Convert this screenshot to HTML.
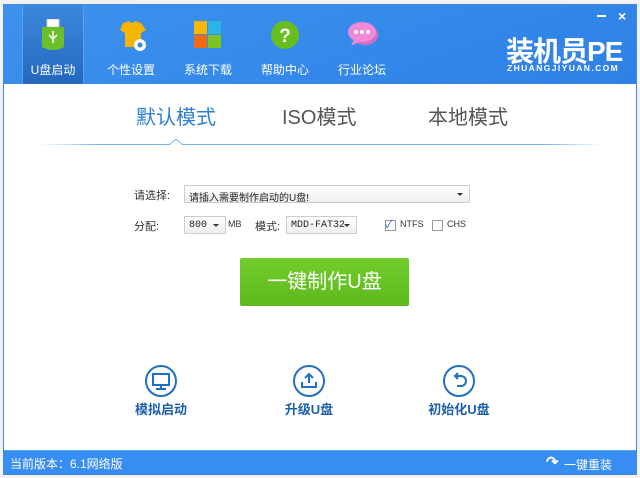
<!DOCTYPE html>
<html><head><meta charset="utf-8"><style>
*{margin:0;padding:0;box-sizing:border-box}
body{width:640px;height:478px;background:#f2f2f2;position:relative;overflow:hidden;font-family:"Liberation Sans","Noto Sans CJK SC",sans-serif}
.win{position:absolute;left:3px;top:4px;width:634px;height:471px;background:#fff;border:1px solid #3a8ae6}
.hd{position:absolute;left:0;top:0;width:632px;height:79px;background:linear-gradient(160deg,#3d92ec 0%,#3488ea 60%,#2f80e4 100%)}
.nav{position:absolute;top:0;height:79px;width:62px;text-align:center;color:#fff;font-size:12px}
.nav .lb{position:absolute;top:56px;width:100%;left:0}
.nav svg{position:absolute;left:15px;top:14px}
.sel{background:linear-gradient(#3b88dd,#2468be);border-left:1px solid #5aa2ee;border-right:1px solid #5aa2ee}
.t{position:absolute;font-size:20px;color:#555}
.s{position:absolute;font-size:11px;color:#333}
.dd{position:absolute;height:18px;border:1px solid #ccc;background:linear-gradient(#fff,#eee);font-size:10px;color:#222;padding:3px 4px;font-family:"Liberation Mono","Noto Sans CJK SC",monospace;white-space:nowrap;overflow:hidden}
.dd:after{content:"";position:absolute;right:6px;top:7px;border:3px solid transparent;border-top:3px solid #333}
.cb{position:absolute;width:11px;height:11px;border:1px solid #999;background:#fff}
.ic{position:absolute;width:32px;height:32px;border:2px solid #1f6fc6;border-radius:50%}
.il{position:absolute;font-size:13px;color:#1f5fa8;font-weight:bold;width:100px;text-align:center}
</style></head><body>
<div class="win">
<div class="hd">
 <div class="nav sel" style="left:18px"><svg width="30" height="34"><rect x="9" y="0" width="12" height="8" fill="#fff" stroke="#ccc"/><path d="M4 8h22v20q-11 6-22 0z" fill="#6cbf2a"/><path d="M15 12v12M11 16l4 4 4-4" stroke="#fff" fill="none" stroke-width="1.5"/></svg><div class="lb">U盘启动</div></div>
 <div class="nav" style="left:96px"><svg width="34" height="36"><path d="M8 4l6-2q3 4 6 0l6 2 5 7-5 3v14H10V14l-5-3z" fill="#f5b400"/><circle cx="25" cy="26" r="6" fill="#fff"/><circle cx="25" cy="26" r="2.5" fill="#3488ea"/></svg><div class="lb">个性设置</div></div>
 <div class="nav" style="left:173px"><svg width="32" height="32"><rect x="2" y="2" width="13" height="13" fill="#f8b800"/><rect x="16" y="2" width="13" height="13" fill="#29b5e8"/><rect x="2" y="16" width="13" height="13" fill="#f26b10"/><rect x="16" y="16" width="13" height="13" fill="#7cc421"/></svg><div class="lb">系统下载</div></div>
 <div class="nav" style="left:250px"><svg width="32" height="32"><circle cx="16" cy="16" r="14" fill="#66bf1e"/><text x="16" y="23" font-size="19" font-weight="bold" fill="#fff" text-anchor="middle" font-family="Liberation Sans">?</text></svg><div class="lb">帮助中心</div></div>
 <div class="nav" style="left:327px"><svg width="34" height="32"><ellipse cx="19" cy="16" rx="13" ry="10" fill="#d86cc0"/><ellipse cx="16" cy="13" rx="14" ry="10" fill="#f08ad8"/><path d="M8 20l-3 7 9-5z" fill="#f08ad8"/><circle cx="10" cy="13" r="2" fill="#fff"/><circle cx="16" cy="13" r="2" fill="#fff"/><circle cx="22" cy="13" r="2" fill="#fff"/></svg><div class="lb">行业论坛</div></div>
 <div style="position:absolute;left:502px;top:25px;color:#fff;font-size:28px;font-weight:bold;letter-spacing:-1px">装机员PE</div>
 <div style="position:absolute;left:503px;top:58px;color:#fff;font-size:8.5px;font-weight:bold;letter-spacing:1.4px">ZHUANGJIYUAN.COM</div>
 <div style="position:absolute;left:593px;top:10px;width:9px;height:2px;background:#fff"></div>
 <div style="position:absolute;left:614px;top:3px;color:#fff;font-size:14px;font-weight:bold">×</div>
</div>
<div class="t" style="left:132px;top:96px;color:#2c7fd8">默认模式</div>
<div class="t" style="left:278px;top:96px">ISO模式</div>
<div class="t" style="left:424px;top:96px">本地模式</div>
<div style="position:absolute;left:36px;top:139px;width:562px;height:1px;background:linear-gradient(90deg,rgba(100,170,235,0),#7ab4ee 10%,#7ab4ee 90%,rgba(100,170,235,0))"></div>
<svg style="position:absolute;left:165px;top:134px" width="14" height="7"><path d="M0 6L7 0L14 6" fill="#fff" stroke="#7ab4ee"/></svg>
<div class="s" style="left:130px;top:182px">请选择:</div>
<div class="dd" style="left:180px;top:180px;width:286px;font-family:'Liberation Sans','Noto Sans CJK SC',sans-serif">请插入需要制作启动的U盘!</div>
<div class="s" style="left:130px;top:213px">分配:</div>
<div class="dd" style="left:180px;top:211px;width:42px">800</div>
<div class="s" style="left:224px;top:214px;font-size:9px">MB</div>
<div class="s" style="left:251px;top:213px">模式:</div>
<div class="dd" style="left:282px;top:211px;width:71px">MDD-FAT32</div>
<div class="cb" style="left:381px;top:215px"></div><div class="s" style="left:381px;top:211px;color:#3366cc">✓</div>
<div class="s" style="left:396px;top:214px;font-size:9px">NTFS</div>
<div class="cb" style="left:428px;top:215px"></div>
<div class="s" style="left:443px;top:214px;font-size:9px">CHS</div>
<div style="position:absolute;left:236px;top:253px;width:169px;height:48px;background:linear-gradient(#72cd2c,#5fb81c);border-radius:2px;color:#fff;font-size:20px;text-align:center;line-height:48px">一键制作U盘</div>
<div class="ic" style="left:141px;top:360px"><svg width="28" height="28"><rect x="6" y="7" width="16" height="11" fill="none" stroke="#1f6fc6" stroke-width="2"/><path d="M14 18v3M9 22h10" stroke="#1f6fc6" stroke-width="2"/></svg></div>
<div class="ic" style="left:289px;top:360px"><svg width="28" height="28"><path d="M14 16V7M10 11l4-4 4 4M7 15v5h14v-5" stroke="#1f6fc6" stroke-width="2" fill="none"/></svg></div>
<div class="ic" style="left:439px;top:360px"><svg width="28" height="28"><path d="M11 9h5a5 5 0 0 1 0 10h-4M13 6l-3 3 3 3" stroke="#1f6fc6" stroke-width="2" fill="none"/></svg></div>
<div class="il" style="left:107px;top:394px">模拟启动</div>
<div class="il" style="left:255px;top:394px">升级U盘</div>
<div class="il" style="left:405px;top:394px">初始化U盘</div>
<div style="position:absolute;left:0;top:445px;width:632px;height:24px;background:#378df0;border-top:1px solid #5aa2f2;color:#fff;font-size:12px">
 <span style="position:absolute;left:6px;top:4px">当前版本：6.1网络版</span>
 <span style="position:absolute;left:542px;top:2px;font-size:15px;font-weight:bold">↷</span>
 <span style="position:absolute;left:560px;top:5px">一键重装</span>
</div>
</div>
</body></html>
